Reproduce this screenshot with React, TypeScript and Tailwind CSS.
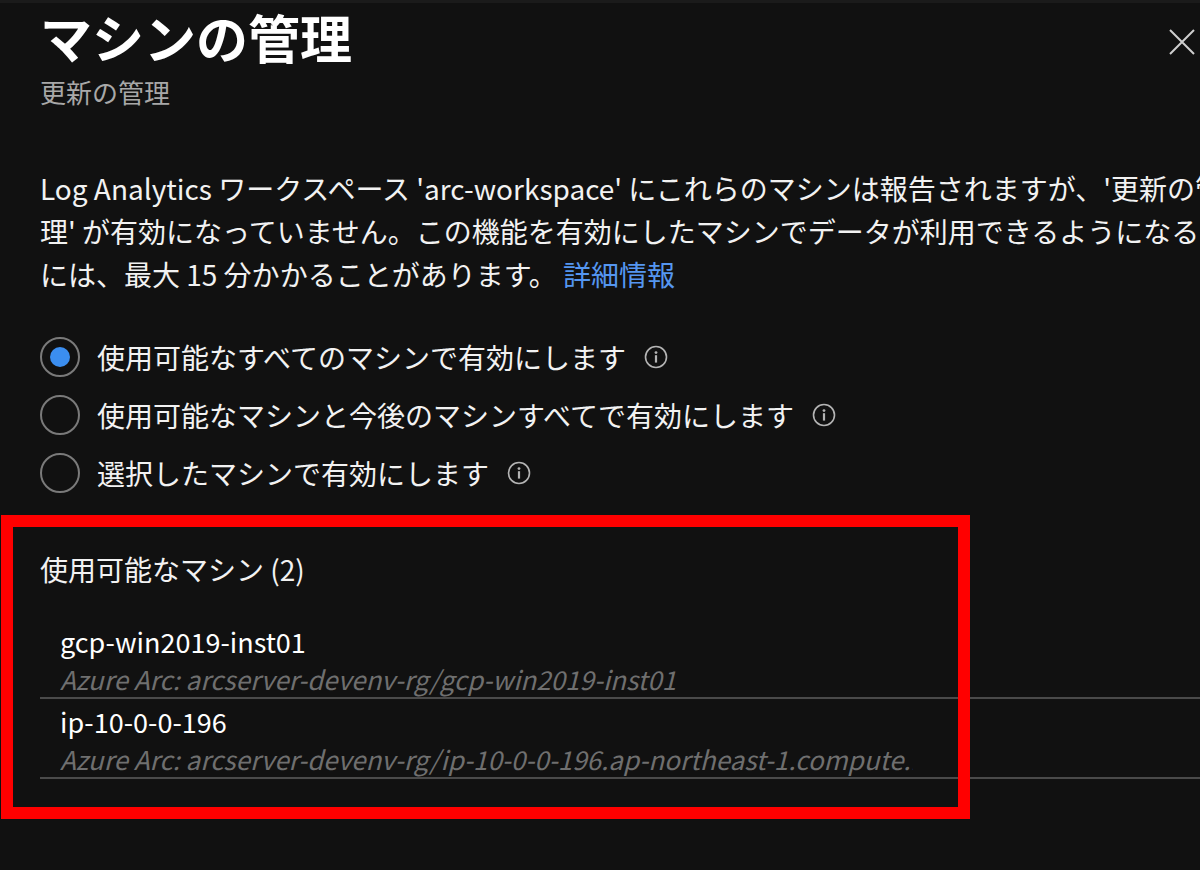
import React from "react";

const machines = [
  { name: "gcp-win2019-inst01", path: "Azure Arc: arcserver-devenv-rg/gcp-win2019-inst01" },
  { name: "ip-10-0-0-196", path: "Azure Arc: arcserver-devenv-rg/ip-10-0-0-196.ap-northeast-1.compute.internal" },
];

const options = [
  { label: "使用可能なすべてのマシンで有効にします", checked: true },
  { label: "使用可能なマシンと今後のマシンすべてで有効にします", checked: false },
  { label: "選択したマシンで有効にします", checked: false },
];

function InfoIcon() {
  return (
    <svg width="24" height="24" viewBox="0 0 24 24" fill="none">
      <circle cx="12" cy="12" r="10.5" stroke="#b4b4b4" strokeWidth="1.6" />
      <circle cx="12" cy="7.6" r="1.4" fill="#b4b4b4" />
      <rect x="10.9" y="10.2" width="2.2" height="7.4" fill="#b4b4b4" />
    </svg>
  );
}

export default function App() {
  return (
    <div
      className="relative w-[1200px] h-[870px] overflow-hidden bg-[#111111] text-[#f2f2f2] border-t-[3px] border-[#1b1b1b]"
      style={{ fontFamily: '"Noto Sans CJK JP", "Noto Sans", sans-serif' }}
    >
      {/* header */}
      <div className="flex justify-between items-start pl-[40px] pr-[4px]">
        <div>
          <h1 className="mt-[3px] text-[52px] leading-[62px] font-bold text-white">マシンの管理</h1>
          <p className="mt-[9px] text-[26px] leading-[30px] text-[#a8a8a8]">更新の管理</p>
        </div>
        <button className="mt-[25px]">
          <svg width="28" height="28" viewBox="0 0 28 28">
            <path d="M2 2 L26 26 M26 2 L2 26" stroke="#cfcfcf" strokeWidth="2" />
          </svg>
        </button>
      </div>

      {/* description */}
      <div className="mt-[60px] pl-[40px] text-[28px] leading-[43px] whitespace-nowrap">
        <div>Log Analytics ワークスペース 'arc-workspace' にこれらのマシンは報告されますが、'更新の管</div>
        <div>理' が有効になっていません。この機能を有効にしたマシンでデータが利用できるようになるまで</div>
        <div>
          には、最大 15 分かかることがあります。 <span className="text-[#5596f0]">詳細情報</span>
        </div>
      </div>

      {/* radio options */}
      <div className="mt-[32px] pl-[40px] flex flex-col">
        {options.map((o) => (
          <div key={o.label} className="flex items-center h-[58px]">
            <div className="w-[40px] h-[40px] rounded-full border-2 border-[#7a7a7a] flex items-center justify-center">
              {o.checked && <div className="w-[20px] h-[20px] rounded-full bg-[#3b8ef0]" />}
            </div>
            <span className="ml-[17px] text-[28px] leading-[36px]">{o.label}</span>
            <span className="ml-[18px] flex">
              <InfoIcon />
            </span>
          </div>
        ))}
      </div>

      {/* available machines */}
      <div className="mt-[49px] pl-[40px]">
        <h2 className="text-[28px] leading-[36px]">使用可能なマシン (2)</h2>
        <div className="mt-[32px] w-[1200px]">
          {machines.map((m) => (
            <div key={m.name} className="pt-[4px] pl-[20px] border-b-2 border-[#4a4a4a]">
              <div className="text-[27px] leading-[38px] text-white">{m.name}</div>
              <div className="w-[853px] overflow-hidden whitespace-nowrap text-[26px] leading-[36px] italic text-[#6f6f6f]">
                {m.path}
              </div>
            </div>
          ))}
        </div>
      </div>

      {/* annotation frame */}
      <div className="absolute left-[1px] top-[512px] w-[969px] h-[304px] border-[12px] border-[#ff0000] pointer-events-none" />
    </div>
  );
}
